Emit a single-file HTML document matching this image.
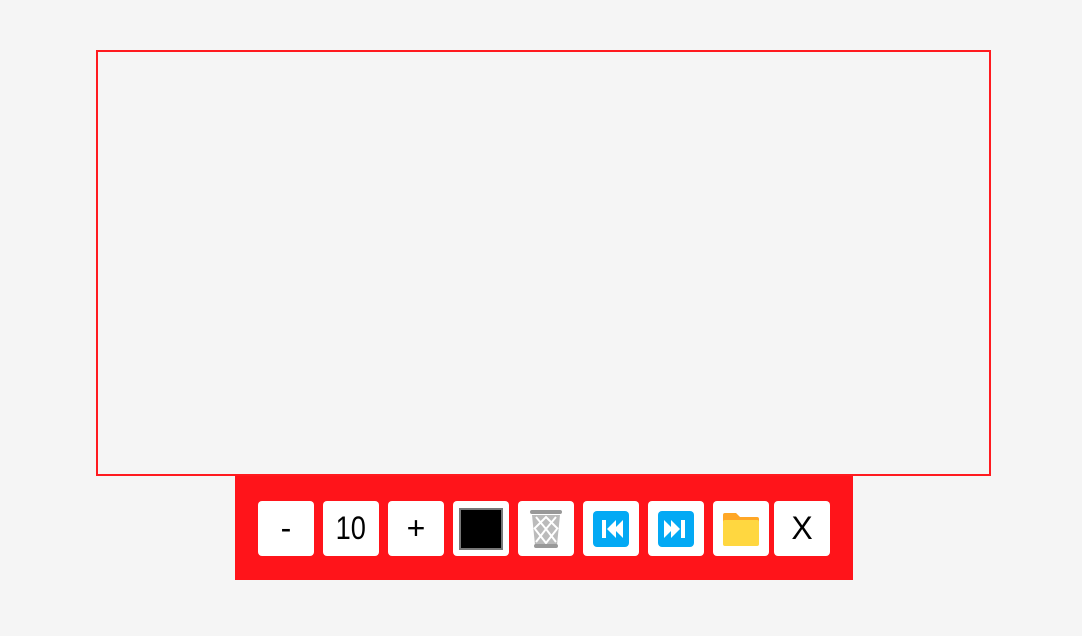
<!DOCTYPE html>
<html><head><style>
body{margin:0;width:1082px;height:636px;background:#f5f5f5;position:relative;font-family:"Liberation Sans",sans-serif;overflow:hidden}
.frame{position:absolute;left:96px;top:50px;width:892px;height:423px;border:2px solid #ff1a1f;box-sizing:content-box}
.bar{position:absolute;left:235px;top:476px;width:618px;height:104px;background:#ff141a}
.b{position:absolute;top:25px;width:56px;height:55px;background:#fff;border-radius:4px;display:flex;align-items:center;justify-content:center;font-size:32px;color:#000}
</style></head><body>
<div class="frame" style="width:891px;height:422px;border-width:2px"></div>
<div class="bar">
<div class="b" style="left:23px">-</div>
<div class="b" style="left:88px"><span style="display:inline-block;transform:scaleX(0.85)">10</span></div>
<div class="b" style="left:153px">+</div>
<div class="b" style="left:218px"><div style="width:40px;height:38px;background:#000;border:2px solid #777"></div></div>
<div class="b" style="left:283px"><svg width="36" height="40" viewBox="0 0 36 40"><rect x="2" y="1" width="32" height="4" rx="2" fill="#999"/><path d="M4 6h28l-3 30H7z" fill="#bbb"/><path d="M8 8l10 12 10-12M7 20l11 14 11-14M6 20l12-12 12 12M8 33l10-13 10 13" stroke="#fff" stroke-width="2" fill="none"/><rect x="6" y="35" width="24" height="4" rx="2" fill="#999"/></svg></div>
<div class="b" style="left:348px"><svg width="36" height="36" viewBox="0 0 36 36"><rect width="36" height="36" rx="4" fill="#03a9f4"/><path d="M9 9h4v18H9zM14 18l9-9v18zM21 18l9-9v18z" fill="#fff"/></svg></div>
<div class="b" style="left:413px"><svg width="36" height="36" viewBox="0 0 36 36"><rect width="36" height="36" rx="4" fill="#03a9f4"/><path d="M23 9h4v18h-4zM22 18l-9-9v18zM15 18l-9-9v18z" fill="#fff"/></svg></div>
<div class="b" style="left:478px"><svg width="36" height="34" viewBox="0 0 36 34"><path d="M0 3a2 2 0 0 1 2-2h11l4 4h17a2 2 0 0 1 2 2v6H0z" fill="#ffa726"/><rect x="0" y="8" width="36" height="26" rx="2" fill="#ffd740"/></svg></div>
<div class="b" style="left:539px">X</div>
</div>
</body></html>
